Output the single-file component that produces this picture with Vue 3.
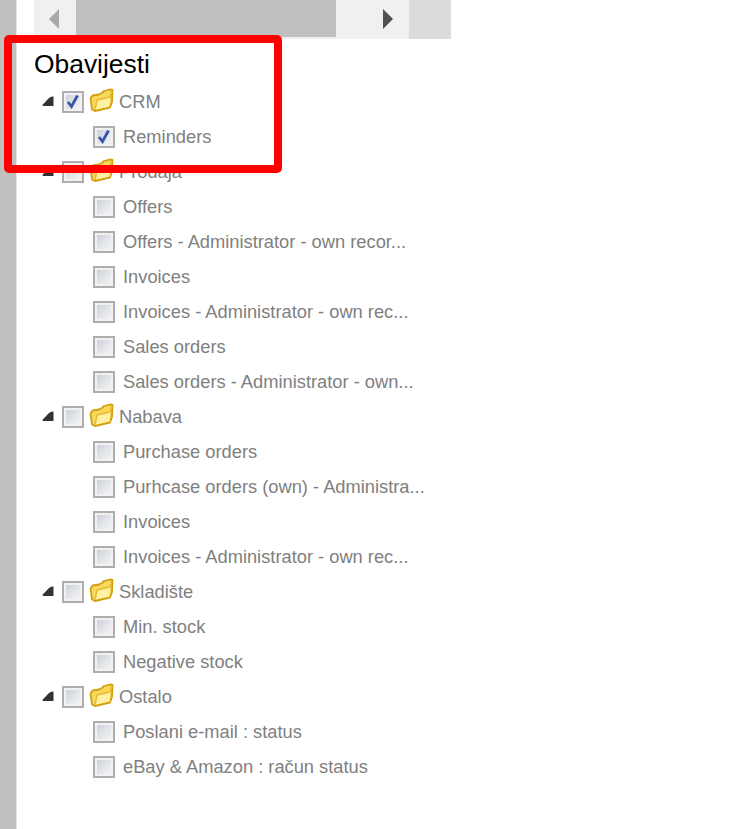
<script setup>
const groups = [
  { name: 'CRM', checked: true, items: ['Reminders'] },
  {
    name: 'Prodaja',
    items: [
      'Offers',
      'Offers - Administrator - own recor...',
      'Invoices',
      'Invoices - Administrator - own rec...',
      'Sales orders',
      'Sales orders - Administrator - own...'
    ]
  },
  {
    name: 'Nabava',
    items: [
      'Purchase orders',
      'Purhcase orders (own) - Administra...',
      'Invoices',
      'Invoices - Administrator - own rec...'
    ]
  },
  { name: 'Skladište', items: ['Min. stock', 'Negative stock'] },
  { name: 'Ostalo', items: ['Poslani e-mail : status', 'eBay & Amazon : račun status'] }
]
</script>

<template>
  <div class="page">
    <div class="side-strip"></div>
    <div class="content">
      <div class="scrollbar">
        <div class="arrow-btn">
          <svg width="12" height="20" viewBox="0 0 12 20"><path d="M11 0V20L1 10Z" fill="#a9a9a9" /></svg>
        </div>
        <div class="thumb"></div>
        <div class="track">
          <svg width="12" height="20" viewBox="0 0 12 20"><path d="M1 0V20L11 10Z" fill="#505050" /></svg>
        </div>
        <div class="track-end"></div>
      </div>

      <div class="title">Obavijesti</div>

      <ul class="tree">
        <li v-for="group in groups" :key="group.name">
          <div class="row">
            <svg class="expander" width="12" height="11" viewBox="0 0 12 11"><path d="M11.5 0.5V10H1.5Q0 10 0.8 8.5L6.5 2.5Q9 0 11.5 0.5Z" fill="#333333" /></svg>
            <span class="check">
              <svg v-if="group.checked" width="14" height="14" viewBox="0 0 14 14"><path d="M2 7L5.5 11.5L11.5 0.5" fill="none" stroke="#3853a8" stroke-width="2.8" /></svg>
            </span>
            <svg class="folder" width="25" height="24" viewBox="0 0 25 24">
              <path d="M1.5 10.5L3.5 7.5L10 6.5L13 5L15 3L21 1.5L23.5 2L23 14L21 19.5L6 23L3 21.5Z" fill="#f7d95e" stroke="#d39f10" stroke-width="1.8" stroke-linejoin="round" />
              <path d="M8.5 12.5L21 9.5L20.5 18.5L7 21.5Z" fill="#fff2a4" />
              <path d="M6 22L8 12L21 9L23 3" fill="none" stroke="#e6b82e" stroke-width="1.3" />
            </svg>
            <span class="group-name">{{ group.name }}</span>
          </div>
          <div v-for="item in group.items" :key="item" class="row child">
            <span class="check">
              <svg v-if="group.checked" width="14" height="14" viewBox="0 0 14 14"><path d="M2 7L5.5 11.5L11.5 0.5" fill="none" stroke="#3853a8" stroke-width="2.8" /></svg>
            </span>
            <span class="item-name">{{ item }}</span>
          </div>
        </li>
      </ul>
    </div>
    <div class="highlight"></div>
  </div>
</template>

<style scoped>
.page {
  position: relative;
  display: flex;
  width: 740px;
  height: 829px;
  overflow: hidden;
  background: #ffffff;
  font-family: "Liberation Sans", Arial, sans-serif;
}

.side-strip {
  width: 16px;
  flex-shrink: 0;
  background: #c0c0c0;
  border-right: 1px solid #e4e4e4;
}

.content {
  flex: 1;
  padding-left: 17px;
}

.scrollbar {
  display: flex;
  width: 417px;
  height: 39px;
  background: #f0f0f0;
}

.arrow-btn {
  width: 42px;
  height: 37px;
  display: flex;
  align-items: center;
  justify-content: center;
  padding-right: 2px;
  box-sizing: border-box;
}

.thumb {
  width: 260px;
  height: 37px;
  background: #c0c0c0;
}

.track {
  width: 73px;
  height: 37px;
  display: flex;
  align-items: center;
  justify-content: flex-end;
  padding-right: 15px;
  box-sizing: border-box;
}

.track-end {
  width: 42px;
  height: 39px;
  background: #dcdcdc;
}

.title {
  height: 45px;
  padding-top: 10px;
  box-sizing: border-box;
  font-size: 26.4px;
  line-height: 30px;
  color: #000000;
}

.tree {
  list-style: none;
  margin: 0;
  padding: 0 0 0 8px;
}

.row {
  display: flex;
  align-items: center;
  height: 35px;
}

.child {
  padding-left: 51px;
}

.expander {
  margin-right: 8px;
  filter: blur(0.4px);
}

.check {
  display: block;
  width: 22px;
  height: 22px;
  flex-shrink: 0;
  box-sizing: border-box;
  padding: 2px;
  border: 2px solid #aeaeae;
  background: linear-gradient(135deg, #c6cad6 0%, #e4e6ea 55%, #f6f6f6 100%);
  box-shadow: inset 0 0 0 2px #f1f1f1;
}

.check svg {
  display: block;
  filter: blur(0.3px);
}

.folder {
  margin-left: 5px;
  margin-top: -3px;
  flex-shrink: 0;
  filter: blur(0.4px);
}

.group-name {
  margin-left: 5px;
  font-size: 18.3px;
  color: #808080;
}

.item-name {
  margin-left: 8px;
  font-size: 18.3px;
  color: #808080;
  white-space: nowrap;
}

.highlight {
  position: absolute;
  left: 4px;
  top: 35px;
  width: 278px;
  height: 138px;
  box-sizing: border-box;
  border: 8px solid #ff0000;
  border-radius: 5px;
}
</style>
